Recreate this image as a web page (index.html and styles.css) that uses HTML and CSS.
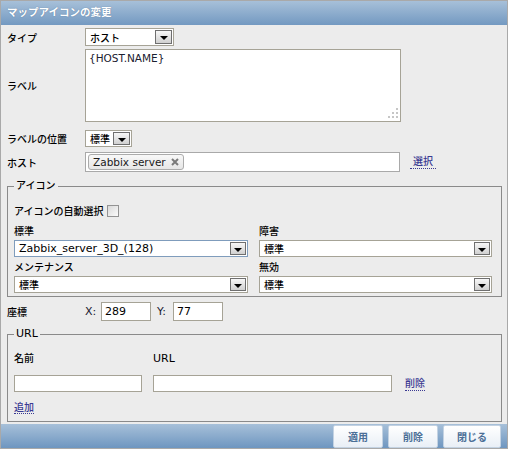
FILE: index.html
```html
<!DOCTYPE html>
<html lang="ja">
<head>
<meta charset="utf-8">
<title>マップアイコンの変更</title>
<link rel="stylesheet" href="styles.css">
</head>
<body>
<div class="dlg">
  <div class="hdr">マップアイコンの変更</div>
  <div class="body">
    <div class="row r-type">
      <span class="lbl">タイプ</span>
      <div class="sel w-type"><span class="val">ホスト</span><span class="arr"></span></div>
    </div>
    <div class="row r-label">
      <span class="lbl">ラベル</span>
      <div class="ta">
        <span class="ta-text">{HOST.NAME}</span>
        <svg class="grip" width="12" height="12" viewBox="0 0 12 12"><g fill="#c6c6c6"><rect x="9" y="0" width="2" height="2"/><rect x="5" y="4" width="2" height="2"/><rect x="9" y="4" width="2" height="2"/><rect x="1" y="8" width="2" height="2"/><rect x="5" y="8" width="2" height="2"/><rect x="9" y="8" width="2" height="2"/></g></svg>
      </div>
    </div>
    <div class="row r-pos">
      <span class="lbl">ラベルの位置</span>
      <div class="sel w-pos"><span class="val">標準</span><span class="arr"></span></div>
    </div>
    <div class="row r-host">
      <span class="lbl">ホスト</span>
      <div class="ms">
        <span class="chip"><span class="chip-t">Zabbix server</span><svg class="chip-x" width="8" height="8" viewBox="0 0 8 8"><path d="M1 1L7 7M7 1L1 7" stroke="#7a7a7a" stroke-width="2"/></svg></span>
      </div>
      <a class="lnk sel-lnk">選択</a>
    </div>

    <fieldset class="fs fs-icon">
      <legend>アイコン</legend>
      <div class="auto"><span class="auto-l">アイコンの自動選択</span><input type="checkbox" class="cb"></div>
      <div class="grid">
        <div class="cell"><div class="cl">標準</div><div class="sel sm focus"><span class="val lt">Zabbix_server_3D_(128)</span><span class="arr"></span></div></div>
        <div class="cell"><div class="cl">障害</div><div class="sel sm"><span class="val">標準</span><span class="arr"></span></div></div>
        <div class="cell"><div class="cl">メンテナンス</div><div class="sel sm"><span class="val">標準</span><span class="arr"></span></div></div>
        <div class="cell"><div class="cl">無効</div><div class="sel sm"><span class="val">標準</span><span class="arr"></span></div></div>
      </div>
    </fieldset>

    <div class="row r-coord">
      <span class="lbl">座標</span>
      <span class="xy lt">X:</span><span class="inp lt w50">289</span>
      <span class="xy y lt">Y:</span><span class="inp lt w50">77</span>
    </div>

    <fieldset class="fs fs-url">
      <legend class="lt">URL</legend>
      <div class="uh"><span class="c1">名前</span><span class="c2 lt">URL</span></div>
      <div class="ur"><span class="inp c1 h17"></span><span class="inp c2 h17"></span><a class="lnk del">削除</a></div>
      <div class="add"><a class="lnk">追加</a></div>
    </fieldset>
  </div>
  <div class="ftr">
    <button class="btn b50">適用</button>
    <button class="btn b50">削除</button>
    <button class="btn b58">閉じる</button>
  </div>
</div>
</body>
</html>
```

FILE: styles.css
```css
html, body { margin: 0; padding: 0; }
body {
  font-family: "DejaVu Sans", "Noto Sans CJK JP", sans-serif;
  font-size: 10px;
  font-weight: 500;
  color: #000;
  background: #fff;
}
.lt { font-size: 11px; font-weight: normal; }

.dlg {
  width: 508px;
  height: 449px;
  box-sizing: border-box;
  border: 1px solid #a9a9a9;
  background: #ececec;
  display: flex;
  flex-direction: column;
}
.hdr {
  flex: none;
  height: 24px;
  line-height: 23px;
  padding-left: 6px;
  background: linear-gradient(#a7c0d9, #7399c1);
  color: #fff;
  font-weight: bold;
  font-size: 10.5px;
  text-shadow: 0 0 1px rgba(40, 70, 110, 0.6);
}
.body {
  flex: 1;
  padding: 3px 5px 0 6px;
}
.row { display: flex; align-items: center; }
.lbl { width: 78px; flex: none; }

.r-type { height: 18px; }
.r-label { margin-top: 3px; height: 73px; }
.r-pos { margin-top: 8px; height: 17px; }
.r-host { margin-top: 5px; height: 20px; }

/* fake select */
.sel {
  box-sizing: border-box;
  height: 100%;
  border: 1px solid #a6a396;
  background: #fff;
  display: flex;
  align-items: stretch;
  padding: 1px;
}
.sel .val { flex: 1; padding-left: 3px; display: flex; align-items: center; white-space: nowrap; overflow: hidden; }
.sel .arr {
  flex: none;
  width: 17px;
  box-sizing: border-box;
  border: 1px solid #6f6f6f;
  background: linear-gradient(#f7f7f7, #d0d0d0);
  display: flex;
  align-items: center;
  justify-content: center;
}
.sel .arr::after {
  content: "";
  margin-top: 2px;
  border-top: 4px solid #000;
  border-left: 4px solid transparent;
  border-right: 4px solid transparent;
}
.w-type { width: 89px; }
.w-pos { width: 47px; }
.sel.sm { height: 17px; }
.sel.sm .arr { width: 16px; }
.sel.focus { border-color: #7f9cbc; }

/* textarea */
.ta {
  position: relative;
  box-sizing: border-box;
  width: 316px;
  height: 73px;
  border: 1px solid #a6a396;
  background: #fff;
  padding: 2px 3px;
}
.ta-text { color: #1a2030; font-size: 10.5px; font-weight: normal; }
.grip { position: absolute; right: 1px; bottom: 1px; }

/* host multiselect */
.ms {
  box-sizing: border-box;
  width: 315px;
  height: 20px;
  border: 1px solid #a9a9a9;
  background: #fff;
  padding: 1px 2px;
  display: flex;
  align-items: center;
}
.chip {
  box-sizing: border-box;
  height: 16px;
  display: flex;
  align-items: center;
  gap: 5px;
  padding: 0 4px 0 4px;
  border: 1px solid #ababab;
  border-radius: 3px;
  background: linear-gradient(#f8f8f8, #e6e6e6);
  color: #1a1a1a;
  font-size: 10.5px;
  font-weight: normal;
}
.chip-x { display: block; }

.lnk {
  color: #3b3a92;
  text-decoration: none;
  border-bottom: 1px dotted #3b3a92;
  cursor: pointer;
}
.sel-lnk { margin-left: 10px; padding: 0 3px; line-height: 13px; }

/* fieldsets */
.fs {
  margin: 0;
  min-width: 0;
  border: 1px solid #8a8a8a;
}
.fs legend {
  padding: 0 2px;
  line-height: 12px;
  height: 12px;
}
.fs-icon {
  margin-top: 8px;
  padding: 0 9px 3px 6px;
}
.auto { display: flex; align-items: center; height: 13px; margin-top: 12px; }
.auto-l { width: 93px; flex: none; }
.cb {
  appearance: none;
  -webkit-appearance: none;
  margin: 0;
  width: 12px;
  height: 12px;
  box-sizing: border-box;
  border: 1px solid #939393;
  background: linear-gradient(135deg, #d9d9d9, #fbfbfb);
}
.grid {
  margin-top: 7px;
  display: grid;
  grid-template-columns: 234px 233px;
  column-gap: 11px;
  row-gap: 3px;
}
.cl { height: 16px; line-height: 16px; }

.r-coord { margin-top: 5px; height: 19px; }
.xy { width: 16px; flex: none; color: #1a2030; }
.xy.y { margin-left: 6px; }
.inp {
  box-sizing: border-box;
  height: 100%;
  border: 1px solid #a6a396;
  background: #fff;
  padding: 0 3px;
  display: flex;
  align-items: center;
}
.w50 { width: 50px; }

.fs-url {
  margin-top: 7px;
  padding: 0 9px 6px 6px;
}
.uh { display: flex; gap: 11px; height: 16px; line-height: 16px; margin-top: 11px; }
.ur { display: flex; gap: 11px; margin-top: 8px; align-items: center; }
.c1 { width: 128px; flex: none; }
.c2 { width: 239px; flex: none; }
.h17 { height: 17px; }
.del { margin-left: 2px; line-height: 13px; }
.add { margin-top: 9px; height: 14px; line-height: 13px; }

/* footer */
.ftr {
  flex: none;
  height: 24px;
  box-sizing: border-box;
  padding: 1px 6px 0 0;
  background: linear-gradient(#a7c0d9, #6e96c0);
  display: flex;
  justify-content: flex-end;
  gap: 5px;
}
.btn {
  height: 23px;
  box-sizing: border-box;
  border: 1px solid #c3d2e2;
  border-radius: 2px;
  background: linear-gradient(#ffffff, #e9eff6);
  color: #4b6f97;
  font-family: "DejaVu Sans", "Noto Sans CJK JP", sans-serif;
  font-weight: bold;
  font-size: 10px;
  padding: 0;
}
.b50 { width: 50px; }
.b58 { width: 58px; }
```
